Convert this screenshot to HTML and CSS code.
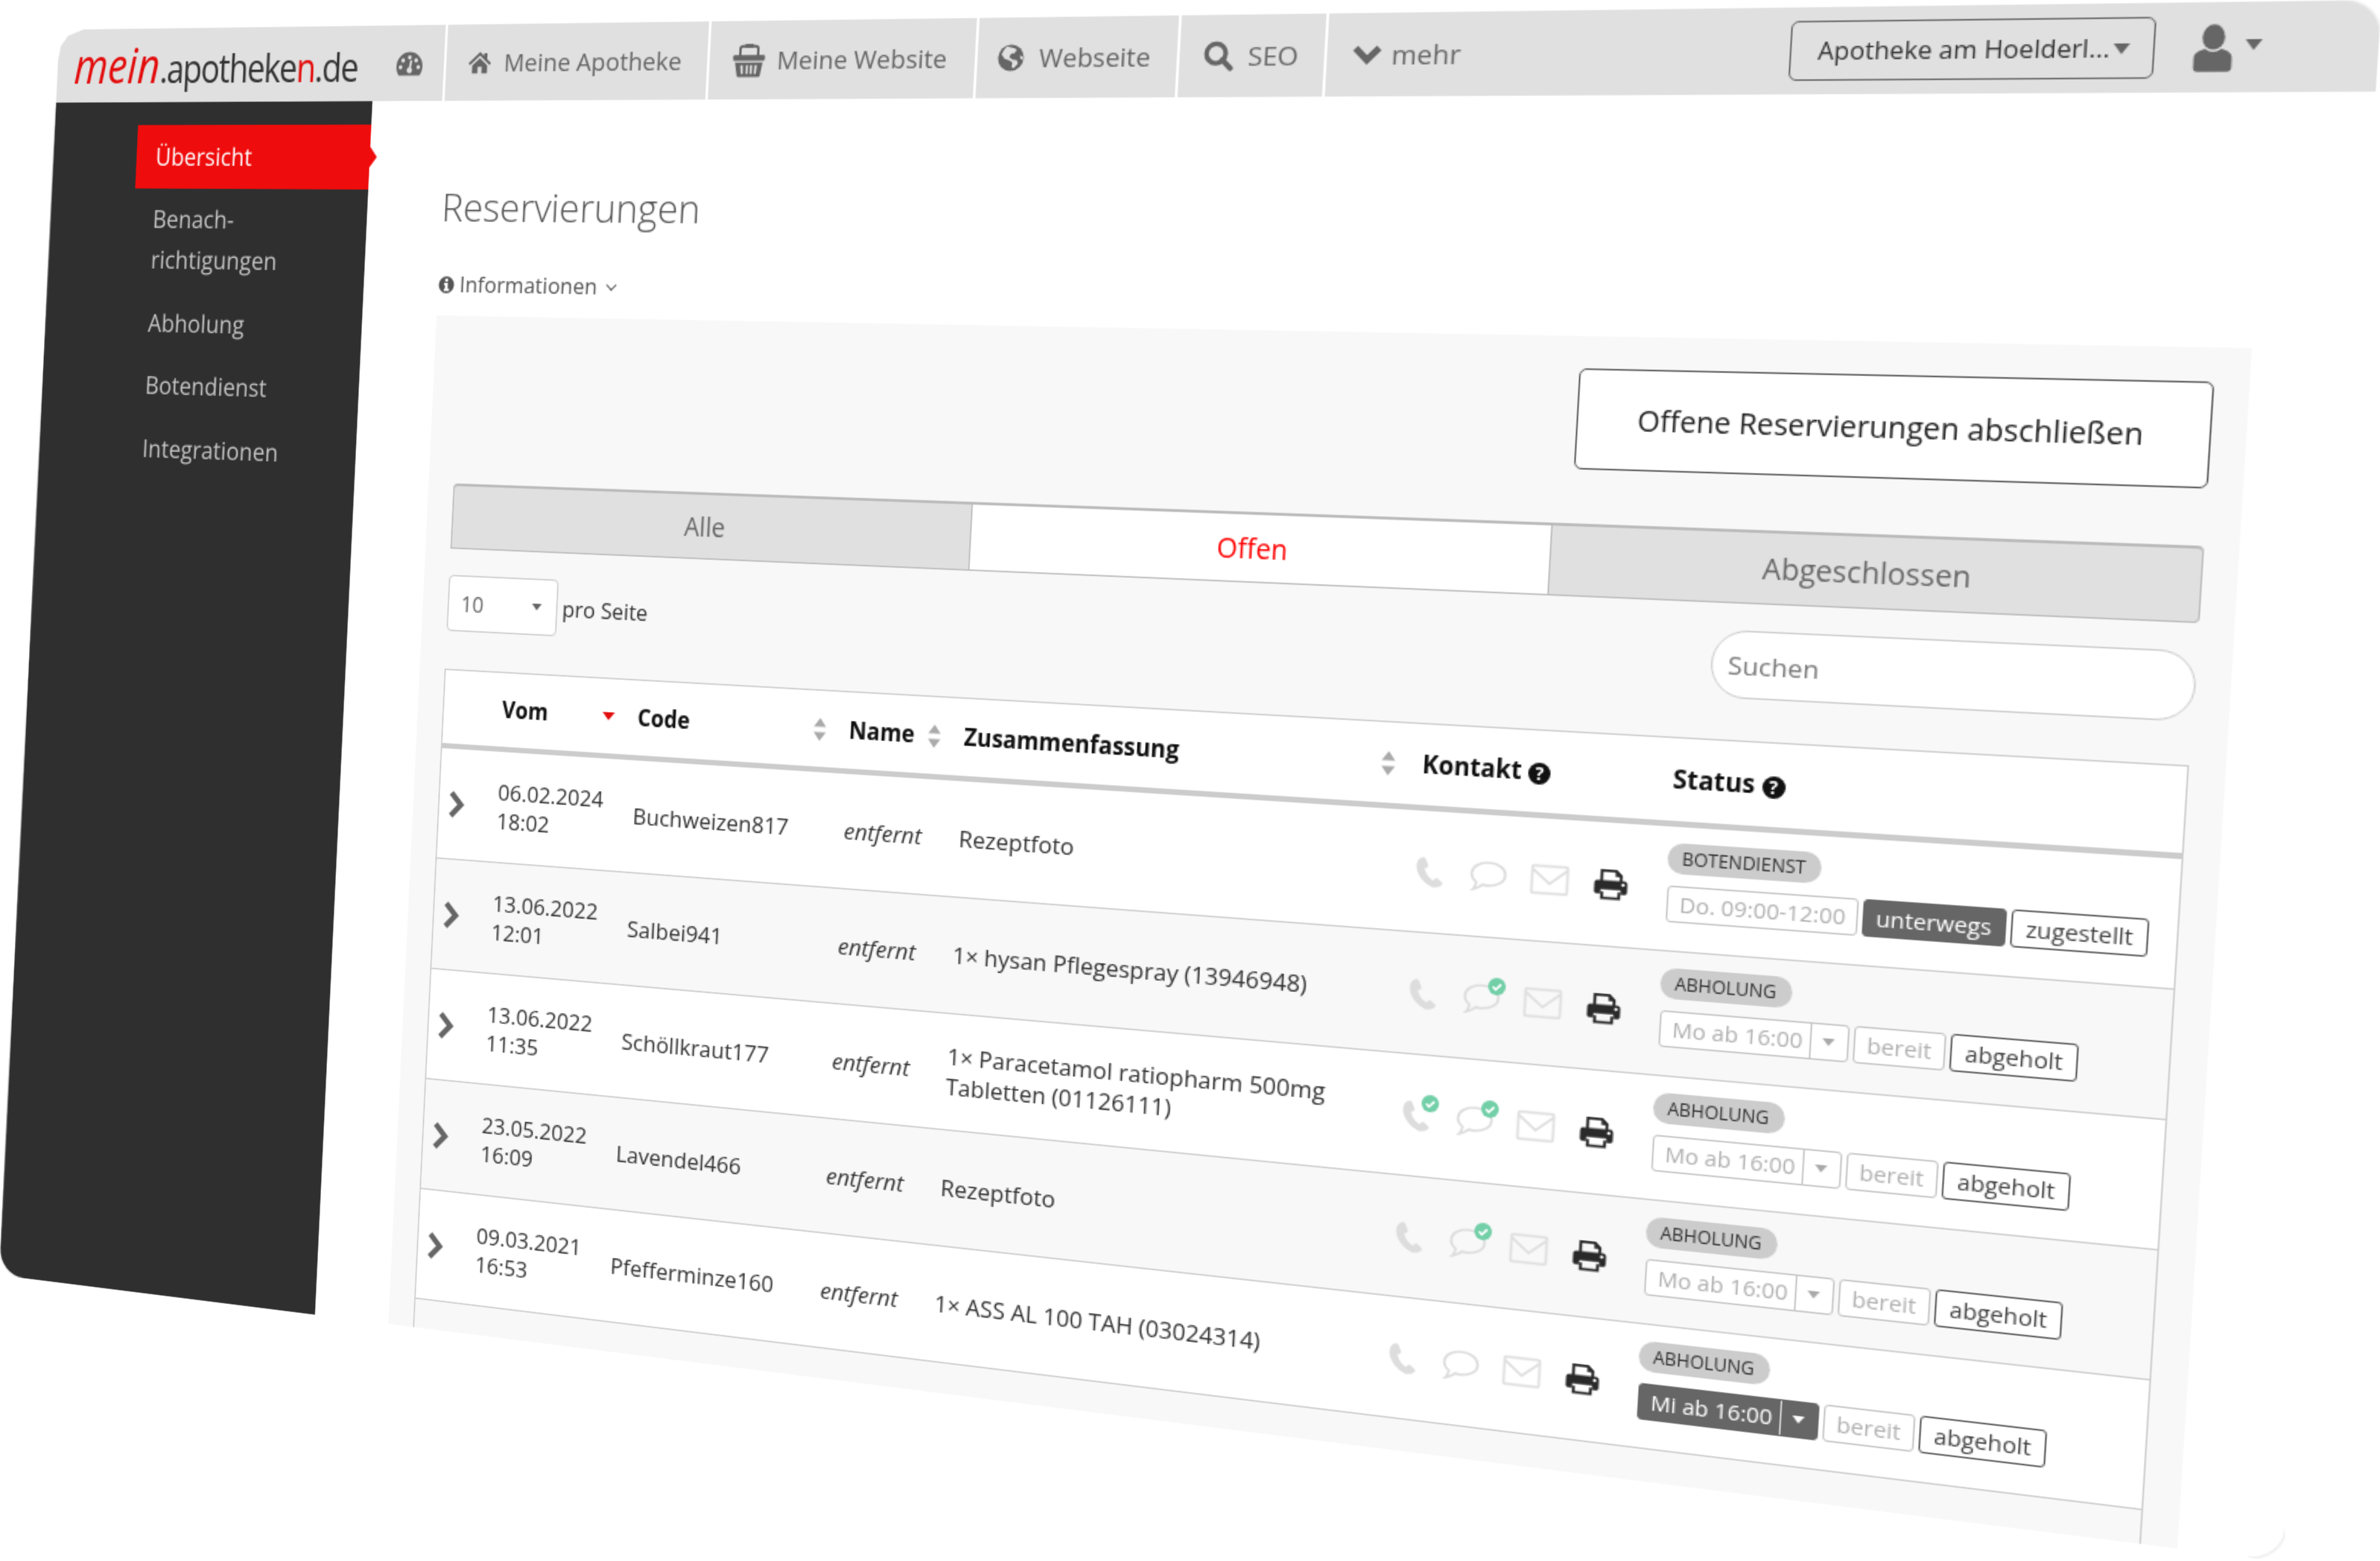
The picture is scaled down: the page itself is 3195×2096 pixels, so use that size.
FILE: index.html
```html
<!DOCTYPE html>
<html lang="de">
<head>
  <meta charset="UTF-8" />
  <title>Reservierungen - mein.apotheken.de</title>
  <link rel="stylesheet" href="styles.css">
</head>
<body>
  <svg class="icon-defs" width="0" height="0">
    <symbol id="i-gauge" viewBox="0 0 24 24"><path fill-rule="evenodd" d="M12 3A11 11 0 0 0 1 14c0 2.600.8 5 2.300 7h17.400c1.500-2 2.300-4.400 2.300-7A11 11 0 0 0 12 3zM12 5.500a1.600 1.600 0 1 1 0 3.200 1.600 1.600 0 0 1 0-3.200zM6.500 7.800a1.600 1.600 0 1 1 0 3.200 1.600 1.600 0 0 1 0-3.200zM17.500 7.800a1.600 1.600 0 1 1 0 3.200 1.600 1.600 0 0 1 0-3.200zM4.500 13a1.600 1.600 0 1 1 0 3.200 1.600 1.600 0 0 1 0-3.200zM19.500 13a1.600 1.600 0 1 1 0 3.200 1.600 1.600 0 0 1 0-3.200zM14.300 9.500l-1 5.600a2.300 2.300 0 1 1-1.700-.3l1-5.600z"/></symbol>
    <symbol id="i-home" viewBox="0 0 24 24"><path d="M12 2.500 0.800 12.600l1.500 1.700L12 5.600l9.700 8.700 1.500-1.700-4-3.600V3.500h-3.200v2.600zM4.500 14.600V22h5.500v-6h4v6h5.500v-7.400L12 8z"/></symbol>
    <symbol id="i-basket" viewBox="0 0 24 24"><path fill="none" stroke="currentColor" stroke-width="1.800" d="M5.500 9.500V4.500q0-2 2-2h9q2 0 2 2v5"/><rect x="9" y="1" width="6" height="2.500"/><rect x="0.500" y="8.500" width="23" height="4" rx="1"/><path fill-rule="evenodd" d="M2 13.500h20l-1.600 9q-.2 1-1.200 1H4.800q-1 0-1.200-1zM6 15.500l.5 6h1.500l-.3-6zM10 15.500v6h1.500v-6zM13 15.500v6h1.500v-6zM16.300 15.500l-.3 6h1.500l.5-6z"/></symbol>
    <symbol id="i-globe" viewBox="0 0 24 24"><circle cx="12" cy="12" r="11.500"/><path fill="#e0e0e0" d="M8 2c3 1 7 1 9 3l-2 3-3 .5-1.500 3 3 2 4 .5 1 3-3.500 4-2-1 .5-4-3-2-4-1-3-4 2-4zM20 10l2.500 1 .5 3-2.500-1.500z"/></symbol>
    <symbol id="i-search" viewBox="0 0 24 24"><circle cx="10" cy="10" r="7.500" fill="none" stroke="currentColor" stroke-width="3.600"/><path d="M15 15l6.500 6.500" fill="none" stroke="currentColor" stroke-width="4.200" stroke-linecap="round"/></symbol>
    <symbol id="i-chevdown" viewBox="0 0 24 24"><path d="M3 7l9 9 9-9" fill="none" stroke="currentColor" stroke-width="5.200"/></symbol>
    <symbol id="i-chevright" viewBox="0 0 12 18"><path d="M2.500 1.500l7 7.500-7 7.500" fill="none" stroke="currentColor" stroke-width="3.600"/></symbol>
    <symbol id="i-user" viewBox="0 0 24 28"><ellipse cx="12" cy="7.500" rx="6.200" ry="7.500"/><path d="M7.500 14.500C4 15.500 1.500 17 1.500 20v6q0 2 2 2h17q2 0 2-2v-6c0-3-2.500-4.500-6-5.500-1.300 1-3 1.800-4.500 1.800s-3.200-.8-4.500-1.800z"/></symbol>
    <symbol id="i-info" viewBox="0 0 24 24"><path fill-rule="evenodd" d="M12 1a11 11 0 1 0 0 22 11 11 0 0 0 0-22zM10 4h4v3.500h-4zM8.500 9.500H14V17h2v3H8.500v-3H10v-4.500H8.500z"/></symbol>
    <symbol id="i-sort" viewBox="0 0 12 20"><path d="M6 1l5 7H1zM1 12h10l-5 7z"/></symbol>
    <symbol id="i-print" viewBox="0 0 24 24"><path fill="none" stroke="currentColor" stroke-width="2" d="M5.500 10V2.500h10l3.500 3.500v4M6 17.500v4.500h12v-4.500"/><path d="M15 2.500v4h4z"/><path fill-rule="evenodd" d="M2.500 9.500h19q2 0 2 2v6q0 1.500-1.500 1.500h-3v-3H5v3H2Q.5 19 .5 17.500v-6q0-2 2-2zM20.500 11a1.200 1.200 0 1 0 0 2.400 1.200 1.200 0 0 0 0-2.400z"/></symbol>
    <symbol id="i-phone" viewBox="0 0 20 22"><path d="M4.300 1.500C2 3 1 5 1.500 8.500c.7 5 5.500 10.500 10.500 12 2.500.7 5 .2 6.500-1.500.7-.8.4-1.700-.3-2.300l-2.400-1.800c-.8-.5-1.500-.4-2.200.3l-1 1c-2.500-1.200-5-4.500-5.800-7.500l1.400-.7c.8-.5 1-1.200.7-2L7 2c-.4-1-1.700-1.200-2.700-.5z"/></symbol>
    <symbol id="i-bubble" viewBox="0 0 26 22"><path fill="none" stroke="currentColor" stroke-width="1.700" d="M13 1.500c6.500 0 11.500 3.500 11.500 8s-5 7.800-11.500 7.800c-1.300 0-2.500-.1-3.700-.4-1.500 1.500-3.700 3-6.300 3.400 1-1 1.800-2.700 1.900-4.900C2.900 13.900 1.500 11.800 1.500 9.500c0-4.500 5-8 11.500-8z"/></symbol>
    <symbol id="i-mail" viewBox="0 0 26 21"><path fill="none" stroke="currentColor" stroke-width="1.700" d="M2.500 1.500h21q1 0 1 1v16q0 1-1 1h-21q-1 0-1-1v-16q0-1 1-1zM2 4l11 9 11-9"/></symbol>
    <symbol id="i-check" viewBox="0 0 12 12"><circle cx="6" cy="6" r="6" fill="#72cfa8"/><path d="M3.200 6.200l2 2 3.600-3.800" fill="none" stroke="#fff" stroke-width="1.600"/></symbol>
  </svg>

  <div class="window">
    <header class="topbar">
      <div class="brand">
        <a class="logo"><span class="logo-mein">mein</span>.apotheke<span class="logo-n">n</span>.de</a>
        <svg class="nav-icon gauge"><use href="#i-gauge"/></svg>
      </div>
      <a class="nav-item w-apotheke"><svg class="nav-icon"><use href="#i-home"/></svg>Meine Apotheke</a>
      <a class="nav-item w-website"><svg class="nav-icon"><use href="#i-basket"/></svg>Meine Website</a>
      <a class="nav-item w-webseite"><svg class="nav-icon"><use href="#i-globe"/></svg>Webseite</a>
      <a class="nav-item w-seo"><svg class="nav-icon"><use href="#i-search"/></svg>SEO</a>
      <a class="nav-item w-more"><svg class="nav-icon"><use href="#i-chevdown"/></svg>mehr</a>
      <div class="pharmacy-select">Apotheke am Hoelderl...<span class="caret"></span></div>
      <div class="user-menu"><svg class="user-icon"><use href="#i-user"/></svg><span class="caret"></span></div>
    </header>

    <div class="body-row">
      <nav class="sidebar">
        <a class="side-item active">Übersicht</a>
        <a class="side-item">Benach-<br>richtigungen</a>
        <a class="side-item">Abholung</a>
        <a class="side-item">Botendienst</a>
        <a class="side-item">Integrationen</a>
      </nav>

      <main class="content">
        <h1>Reservierungen</h1>
        <div class="info-toggle"><svg class="info-icon"><use href="#i-info"/></svg>Informationen <span class="info-arrow"></span></div>

        <section class="panel">
          <div class="panel-actions">
            <button class="close-all">Offene Reservierungen abschließen</button>
          </div>

          <div class="tabs">
            <div class="tab">Alle</div>
            <div class="tab tab-active">Offen</div>
            <div class="tab">Abgeschlossen</div>
          </div>

          <div class="toolbar">
            <div class="per-page">
              <div class="per-page-select">10<span class="caret mini"></span></div>
              <span>pro Seite</span>
            </div>
            <input class="search" type="text" placeholder="Suchen" />
          </div>

          <table class="orders">
            <colgroup>
              <col class="c-toggle"><col class="c-date"><col class="c-code"><col class="c-name"><col class="c-sum"><col class="c-contact"><col class="c-status">
            </colgroup>
            <thead>
              <tr>
                <th></th>
                <th><div class="th-inner">Vom<span class="sort-active"></span></div></th>
                <th><div class="th-inner">Code<svg class="sort"><use href="#i-sort"/></svg></div></th>
                <th><div class="th-inner">Name<svg class="sort"><use href="#i-sort"/></svg></div></th>
                <th><div class="th-inner th-far">Zusammenfassung<svg class="sort"><use href="#i-sort"/></svg></div></th>
                <th class="th-contact">Kontakt <span class="help">?</span></th>
                <th>Status <span class="help">?</span></th>
              </tr>
            </thead>
            <tbody>
              <tr>
                <td><svg class="chev"><use href="#i-chevright"/></svg></td>
                <td>06.02.2024<br>18:02</td>
                <td>Buchweizen817</td>
                <td class="removed">entfernt</td>
                <td>Rezeptfoto</td>
                <td>
                  <div class="contact">
                    <span class="slot"><svg class="ic-phone"><use href="#i-phone"/></svg></span>
                    <span class="slot"><svg class="ic-bubble"><use href="#i-bubble"/></svg></span>
                    <span class="slot"><svg class="ic-mail"><use href="#i-mail"/></svg></span>
                    <span class="slot"><svg class="ic-print"><use href="#i-print"/></svg></span>
                  </div>
                </td>
                <td class="status">
                  <span class="badge">BOTENDIENST</span>
                  <div class="actions">
                    <span class="chip chip-off w-slot">Do. 09:00-12:00</span>
                    <span class="chip chip-on">unterwegs</span>
                    <span class="chip">zugestellt</span>
                  </div>
                </td>
              </tr>
              <tr>
                <td><svg class="chev"><use href="#i-chevright"/></svg></td>
                <td>13.06.2022<br>12:01</td>
                <td>Salbei941</td>
                <td class="removed">entfernt</td>
                <td>1× hysan Pflegespray (13946948)</td>
                <td>
                  <div class="contact">
                    <span class="slot"><svg class="ic-phone"><use href="#i-phone"/></svg></span>
                    <span class="slot"><svg class="ic-bubble"><use href="#i-bubble"/></svg><svg class="tick"><use href="#i-check"/></svg></span>
                    <span class="slot"><svg class="ic-mail"><use href="#i-mail"/></svg></span>
                    <span class="slot"><svg class="ic-print"><use href="#i-print"/></svg></span>
                  </div>
                </td>
                <td class="status">
                  <span class="badge">ABHOLUNG</span>
                  <div class="actions">
                    <span class="chip-group chip-off"><span class="chip-label">Mo ab 16:00</span><span class="chip-caret"><span class="caret mini"></span></span></span>
                    <span class="chip chip-off">bereit</span>
                    <span class="chip">abgeholt</span>
                  </div>
                </td>
              </tr>
              <tr>
                <td><svg class="chev"><use href="#i-chevright"/></svg></td>
                <td>13.06.2022<br>11:35</td>
                <td>Schöllkraut177</td>
                <td class="removed">entfernt</td>
                <td>1× Paracetamol ratiopharm 500mg Tabletten (01126111)</td>
                <td>
                  <div class="contact">
                    <span class="slot"><svg class="ic-phone"><use href="#i-phone"/></svg><svg class="tick"><use href="#i-check"/></svg></span>
                    <span class="slot"><svg class="ic-bubble"><use href="#i-bubble"/></svg><svg class="tick"><use href="#i-check"/></svg></span>
                    <span class="slot"><svg class="ic-mail"><use href="#i-mail"/></svg></span>
                    <span class="slot"><svg class="ic-print"><use href="#i-print"/></svg></span>
                  </div>
                </td>
                <td class="status">
                  <span class="badge">ABHOLUNG</span>
                  <div class="actions">
                    <span class="chip-group chip-off"><span class="chip-label">Mo ab 16:00</span><span class="chip-caret"><span class="caret mini"></span></span></span>
                    <span class="chip chip-off">bereit</span>
                    <span class="chip">abgeholt</span>
                  </div>
                </td>
              </tr>
              <tr>
                <td><svg class="chev"><use href="#i-chevright"/></svg></td>
                <td>23.05.2022<br>16:09</td>
                <td>Lavendel466</td>
                <td class="removed">entfernt</td>
                <td>Rezeptfoto</td>
                <td>
                  <div class="contact">
                    <span class="slot"><svg class="ic-phone"><use href="#i-phone"/></svg></span>
                    <span class="slot"><svg class="ic-bubble"><use href="#i-bubble"/></svg><svg class="tick"><use href="#i-check"/></svg></span>
                    <span class="slot"><svg class="ic-mail"><use href="#i-mail"/></svg></span>
                    <span class="slot"><svg class="ic-print"><use href="#i-print"/></svg></span>
                  </div>
                </td>
                <td class="status">
                  <span class="badge">ABHOLUNG</span>
                  <div class="actions">
                    <span class="chip-group chip-off"><span class="chip-label">Mo ab 16:00</span><span class="chip-caret"><span class="caret mini"></span></span></span>
                    <span class="chip chip-off">bereit</span>
                    <span class="chip">abgeholt</span>
                  </div>
                </td>
              </tr>
              <tr>
                <td><svg class="chev"><use href="#i-chevright"/></svg></td>
                <td>09.03.2021<br>16:53</td>
                <td>Pfefferminze160</td>
                <td class="removed">entfernt</td>
                <td>1× ASS AL 100 TAH (03024314)</td>
                <td>
                  <div class="contact">
                    <span class="slot"><svg class="ic-phone"><use href="#i-phone"/></svg></span>
                    <span class="slot"><svg class="ic-bubble"><use href="#i-bubble"/></svg></span>
                    <span class="slot"><svg class="ic-mail"><use href="#i-mail"/></svg></span>
                    <span class="slot"><svg class="ic-print"><use href="#i-print"/></svg></span>
                  </div>
                </td>
                <td class="status">
                  <span class="badge">ABHOLUNG</span>
                  <div class="actions">
                    <span class="chip-group chip-dark"><span class="chip-label">Mi ab 16:00</span><span class="chip-caret"><span class="caret mini"></span></span></span>
                    <span class="chip chip-off">bereit</span>
                    <span class="chip">abgeholt</span>
                  </div>
                </td>
              </tr>
              <tr class="row-empty"><td colspan="7"></td></tr>
            </tbody>
          </table>
        </section>
      </main>
    </div>
  </div>
</body>
</html>
```

FILE: styles.css
```css
html, body {
  margin: 0;
  width: 3195px;
  height: 2096px;
  overflow: hidden;
  background: #fff;
}
body {
  font-family: 'Open Sans', 'Liberation Sans', sans-serif;
  color: #333;
}
.icon-defs {
  position: absolute;
}
/* the whole app is one tilted screen */
.window {
  width: 1690px;
  height: 1000px;
  background: #fff;
  border-radius: 22px;
  overflow: hidden;
  display: flex;
  flex-direction: column;
  box-shadow: 0 0 2px rgba(0,0,0,0.25);
  clip-path: polygon(26px 0, 100% 0, 100% 100%, 0 100%, 4px 24px, 6px 13px, 12px 5px);
  transform-origin: 0 0;
  transform: matrix3d(1.46112,-0.023669,0,-0.00012099, -0.07501,1.6888,0,0.000009788, 0,0,1,0, 74,40,0,1);
}

/* top bar */
.topbar {
  height: 58px;
  flex: none;
  background: #e0e0e0;
  display: flex;
  align-items: stretch;
}
.brand {
  width: 342px;
  display: flex;
  align-items: center;
  padding-left: 19px;
  box-sizing: border-box;
}
.logo {
  display: block;
  width: 282px;
  flex: none;
  margin-top: -3px;
  font-size: 31px;
  letter-spacing: -1.2px;
  color: #333;
  white-space: nowrap;
  transform: scaleX(0.9);
  transform-origin: 0 50%;
}
.logo-mein {
  font-size: 39px;
  font-style: italic;
  letter-spacing: 0;
  color: #e30d0d;
}
.logo-n {
  color: #e30d0d;
}
.nav-item {
  display: flex;
  align-items: center;
  box-sizing: border-box;
  border-left: 2px solid #fff;
  font-size: 19px;
  color: #666;
  white-space: nowrap;
}
.w-apotheke { width: 215px; padding-left: 18px; gap: 10px; }
.w-website { width: 207px; padding-left: 18px; gap: 9px; }
.w-webseite { width: 149px; padding-left: 15px; gap: 11px; }
.w-seo { width: 105px; padding-left: 17px; gap: 10px; }
.w-more { width: 180px; padding-left: 17px; gap: 6px; }
.nav-icon {
  width: 20px;
  height: 22px;
  fill: #666;
  color: #666;
  flex: none;
}
.w-website .nav-icon {
  width: 26px;
  height: 28px;
}
.w-seo .nav-icon, .w-more .nav-icon {
  width: 22px;
  height: 22px;
}
.brand .gauge {
  width: 24px;
  height: 25px;
}
.pharmacy-select {
  align-self: center;
  margin-left: 133px;
  width: 227px;
  height: 40px;
  box-sizing: border-box;
  border: 1.500px solid #666;
  border-radius: 5px;
  padding: 0 0 0 17px;
  display: flex;
  align-items: center;
  gap: 2px;
  font-size: 16.200px;
  color: #333;
  white-space: nowrap;
}
.caret {
  border-top: 7px solid #666;
  border-left: 5px solid transparent;
  border-right: 5px solid transparent;
  flex: none;
}
.caret.mini {
  border-top-width: 5px;
  border-left-width: 4px;
  border-right-width: 4px;
}
.user-menu {
  display: flex;
  align-items: center;
  gap: 6px;
  margin-left: 22px;
}
.user-menu .caret {
  margin-top: -3px;
}
.user-icon {
  width: 26px;
  height: 31px;
  fill: #666;
}

/* sidebar */
.body-row {
  flex: 1;
  display: flex;
  min-height: 0;
}
.sidebar {
  width: 283px;
  flex: none;
  box-sizing: border-box;
  background: #2f2f2f;
  padding: 18px 0 0 79px;
}
.side-item {
  display: block;
  position: relative;
  padding: 8.750px 0 8.750px 17px;
  font-size: 19px;
  line-height: 32px;
  color: #c4c4c4;
}
.side-item.active {
  background: #ef0c0c;
  color: #fff;
}
.side-item.active::after {
  content: "";
  position: absolute;
  left: 100%;
  top: 17px;
  border-left: 6px solid #ef0c0c;
  border-top: 8px solid transparent;
  border-bottom: 8px solid transparent;
}

/* main */
.content {
  flex: 1;
  min-width: 0;
  padding: 0 63px;
  display: flex;
  flex-direction: column;
}
h1 {
  margin: 61px 0 0;
  font-size: 30.200px;
  line-height: 40px;
  font-weight: 300;
  color: #555;
}
.info-toggle {
  margin-top: 28px;
  display: flex;
  align-items: center;
  gap: 4px;
  font-size: 16.900px;
  line-height: 22px;
  color: #555;
}
.info-icon {
  width: 14px;
  height: 15px;
  fill: #555;
}
.info-arrow {
  width: 6px;
  height: 6px;
  box-sizing: border-box;
  border-right: 1px solid #555;
  border-bottom: 1px solid #555;
  transform: rotate(45deg);
  margin: -2px 0 0 4px;
}
.panel {
  margin-top: 13px;
  flex: 1;
  min-height: 0;
  background: #f8f8f8;
  padding: 22px 21px 0;
  overflow: hidden;
}
.panel-actions {
  display: flex;
  justify-content: flex-end;
}
.close-all {
  width: 401px;
  height: 69px;
  background: #fff;
  border: 1px solid #555;
  border-radius: 5px;
  font-family: inherit;
  font-size: 19.300px;
  color: #222;
}

/* tabs */
.tabs {
  margin-top: 37px;
  display: grid;
  grid-template-columns: 1fr 1fr 1fr;
  height: 50px;
}
.tab {
  display: flex;
  align-items: center;
  justify-content: center;
  background: #e0e0e0;
  border: 1px solid #bbb;
  border-top-width: 2px;
  border-left: 0;
  font-size: 19.200px;
  color: #666;
}
.tab:first-child {
  border-left: 1px solid #bbb;
  border-radius: 4px 0 0 0;
}
.tab:last-child {
  border-radius: 0 4px 4px 0;
}
.tab-active {
  background: #fff;
  color: #f00;
}

/* page size + search */
.toolbar {
  margin-top: 20px;
  display: flex;
  justify-content: space-between;
}
.per-page {
  display: flex;
  align-items: center;
  gap: 4px;
  font-size: 16.700px;
  color: #333;
}
.per-page-select {
  width: 91px;
  height: 43px;
  box-sizing: border-box;
  background: #fff;
  border: 1px solid #ccc;
  border-radius: 4px;
  padding: 0 12px 0 10px;
  display: flex;
  align-items: center;
  justify-content: space-between;
  color: #666;
}
.search {
  width: 303px;
  height: 46px;
  margin: -2px 0 -1px;
  box-sizing: border-box;
  background: #fff;
  border: 1px solid #ccc;
  border-radius: 23px;
  padding: 0 10px;
  font-family: inherit;
  font-size: 17.200px;
}
.search::placeholder {
  color: #777;
  opacity: 1;
}

/* table */
.orders {
  margin-top: 29px;
  width: 1238px;
  table-layout: fixed;
  border-collapse: collapse;
  background: #fff;
  border: 1px solid #ccc;
  font-size: 17px;
  line-height: 22px;
}
.c-toggle { width: 41px; }
.c-date { width: 111px; }
.c-code { width: 167px; }
.c-name { width: 88px; }
.c-sum { width: 327px; }
.c-contact { width: 173px; }
.orders th {
  height: 56px;
  padding: 0 8px;
  text-align: left;
  font-size: 16.900px;
  font-weight: 700;
  color: #111;
  border-bottom: 4px solid #ccc;
  white-space: nowrap;
}
.th-inner {
  display: flex;
  align-items: center;
  justify-content: space-between;
  padding-right: 1px;
}
.th-inner.th-far {
  padding-right: 0;
  margin-right: -2px;
}
.th-contact {
  padding-left: 12px !important;
}
.sort {
  width: 12px;
  height: 19px;
  fill: #aaa;
  flex: none;
}
.sort-active {
  margin-right: 2px;
  border-top: 6px solid #e30d0d;
  border-left: 5px solid transparent;
  border-right: 5px solid transparent;
}
.help {
  display: inline-block;
  width: 15px;
  height: 15px;
  border-radius: 50%;
  background: #111;
  color: #fff;
  font-size: 12px;
  line-height: 15px;
  text-align: center;
}
.orders td {
  height: 84px;
  padding: 0 8px;
  border-top: 1px solid #ccc;
  vertical-align: middle;
}
.orders tbody tr:first-child td {
  border-top: 0;
}
.orders tbody tr:nth-child(even) td {
  background: #f8f8f8;
}
.chev {
  display: block;
  width: 14px;
  height: 21px;
  color: #666;
  margin-left: -1px;
}
.removed {
  font-style: italic;
}
.contact {
  display: flex;
  margin: 0 -8px;
}
.slot {
  position: relative;
  width: 41px;
  height: 24px;
  display: flex;
  align-items: center;
  justify-content: center;
}
.ic-phone {
  width: 21px;
  height: 23px;
  fill: #ddd;
}
.ic-bubble {
  width: 26px;
  height: 23px;
  color: #ddd;
}
.ic-mail {
  width: 27px;
  height: 22px;
  color: #e0e0e0;
}
.ic-print {
  width: 23px;
  height: 24px;
  margin-left: 1px;
  fill: #2a2a2a;
  color: #2a2a2a;
}
.tick {
  position: absolute;
  left: 24px;
  top: -3px;
  width: 12px;
  height: 12px;
}

/* status cell */
.orders td.status {
  height: 73px;
  padding-bottom: 11px;
}
.badge {
  display: inline-block;
  background: #ccc;
  color: #333;
  border-radius: 11px;
  padding: 0 10px;
  margin-left: -1px;
  font-size: 12px;
  line-height: 21px;
}
.actions {
  margin-top: 8px;
  display: flex;
  gap: 3px;
}
.chip {
  box-sizing: border-box;
  height: 25px;
  padding: 0 8px;
  background: #fff;
  border: 1px solid #555;
  border-radius: 3px;
  font-size: 14.800px;
  line-height: 23px;
  color: #444;
  white-space: nowrap;
}
.chip-off {
  border-color: #c4c4c4;
  color: #b0b0b0;
}
.w-slot {
  width: 124px;
}
.chip-on {
  background: #666;
  border-color: #666;
  color: #fff;
}
.chip-group {
  box-sizing: border-box;
  width: 123px;
  height: 25px;
  display: flex;
  background: #fff;
  border: 1px solid #c4c4c4;
  border-radius: 3px;
  font-size: 14.800px;
  line-height: 23px;
  white-space: nowrap;
}
.chip-label {
  flex: 1;
  padding-left: 8px;
}
.chip-caret {
  width: 23px;
  border-left: 1px solid #c4c4c4;
  display: flex;
  align-items: center;
  justify-content: center;
}
.chip-group .caret {
  border-top-color: #aaa;
}
.chip-dark {
  width: 118px;
  background: #666;
  border-color: #666;
  color: #fff;
}
.chip-dark .chip-caret {
  border-left-color: #ddd;
}
.chip-dark .caret {
  border-top-color: #fff;
}
```
